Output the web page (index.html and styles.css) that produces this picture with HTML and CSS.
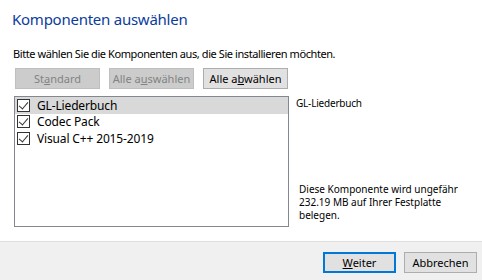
FILE: index.html
```html
<!DOCTYPE html>
<html lang="de">
<head>
    <meta charset="UTF-8">
    <title>Komponenten auswählen</title>
    <link rel="stylesheet" href="styles.css">
</head>
<body>
    <div class="page">
        <h1 class="title">Komponenten auswählen</h1>
        <p class="intro">Bitte wählen Sie die Komponenten aus, die Sie installieren möchten.</p>

        <div class="toolbar">
            <button class="btn" disabled>St<u>a</u>ndard</button>
            <button class="btn" disabled>Alle a<u>u</u>swählen</button>
            <button class="btn">Alle a<u>b</u>wählen</button>
        </div>

        <div class="main">
            <ul class="list">
                <li class="item selected"><span class="check"></span>GL-Liederbuch</li>
                <li class="item"><span class="check"></span>Codec Pack</li>
                <li class="item"><span class="check"></span>Visual C++ 2015-2019</li>
            </ul>
            <div class="info">
                <p class="info-name">GL-Liederbuch</p>
                <p class="info-size">Diese Komponente wird ungefähr 232.19 MB auf Ihrer Festplatte belegen.</p>
            </div>
        </div>
    </div>

    <div class="footer">
        <button class="btn primary"><u>W</u>eiter</button>
        <button class="btn">Abbrechen</button>
    </div>
</body>
</html>
```

FILE: styles.css
```css
* {
    margin: 0;
    padding: 0;
    box-sizing: border-box;
}

body {
    width: 482px;
    height: 280px;
    background: #fff;
    color: #000;
    font-family: 'Noto Sans', 'DejaVu Sans', sans-serif;
    font-size: 11px;
    display: flex;
    flex-direction: column;
    overflow: hidden;
}

/* Kopf und Inhalt */
.page {
    flex: 1;
    padding: 8px 0 0 12px;
}

.title {
    font-size: 15px;
    font-weight: normal;
    color: #0a3c9c;
    line-height: 22px;
    letter-spacing: -0.25px;
}

.intro {
    margin-top: 17px;
    margin-left: 1px;
    font-size: 11px;
    line-height: 14px;
    letter-spacing: -0.42px;
}

.toolbar {
    display: flex;
    gap: 9px;
    margin: 7px 0 0 3px;
}

.btn {
    width: 85px;
    height: 21px;
    background: #e1e1e1;
    border: 1px solid #adadad;
    font-family: inherit;
    font-size: 11px;
    color: #000;
}

.btn:disabled {
    background: #cccccc;
    border-color: #bfbfbf;
    color: #838383;
}

/* Liste der Komponenten */
.main {
    display: flex;
    margin-top: 7px;
    margin-left: 2px;
}

.list {
    list-style: none;
    width: 275px;
    height: 131px;
    border: 1px solid #828790;
}

.item {
    display: flex;
    align-items: center;
    height: 16.5px;
    padding-left: 2px;
    font-size: 12px;
    letter-spacing: -0.15px;
}

.item.selected {
    background: #d9d9d9;
}

.check {
    width: 13px;
    height: 13px;
    margin-right: 7px;
    border: 1px solid #333;
    background: #fff;
    position: relative;
}

.check::after {
    content: "";
    position: absolute;
    left: 3px;
    top: 0px;
    width: 4px;
    height: 8px;
    border: solid #333;
    border-width: 0 1px 1px 0;
    transform: rotate(40deg);
}

.info {
    flex: 1;
    display: flex;
    flex-direction: column;
    justify-content: space-between;
    padding: 0 0 5px 7px;
}

.info-name {
    font-size: 10px;
    line-height: 14px;
    letter-spacing: -0.2px;
}

.info-size {
    font-size: 10px;
    line-height: 13px;
    padding-left: 3px;
    width: 175px;
}

/* Fußleiste */
.footer {
    height: 39px;
    background: #f0f0f0;
    border-top: 1px solid #dfdfdf;
    display: flex;
    justify-content: flex-end;
    align-items: flex-start;
    gap: 8px;
    padding: 10px 5px 0 0;
}

.footer .btn {
    width: 73px;
}

.btn.primary {
    border: 2px solid #0078d7;
}
```
